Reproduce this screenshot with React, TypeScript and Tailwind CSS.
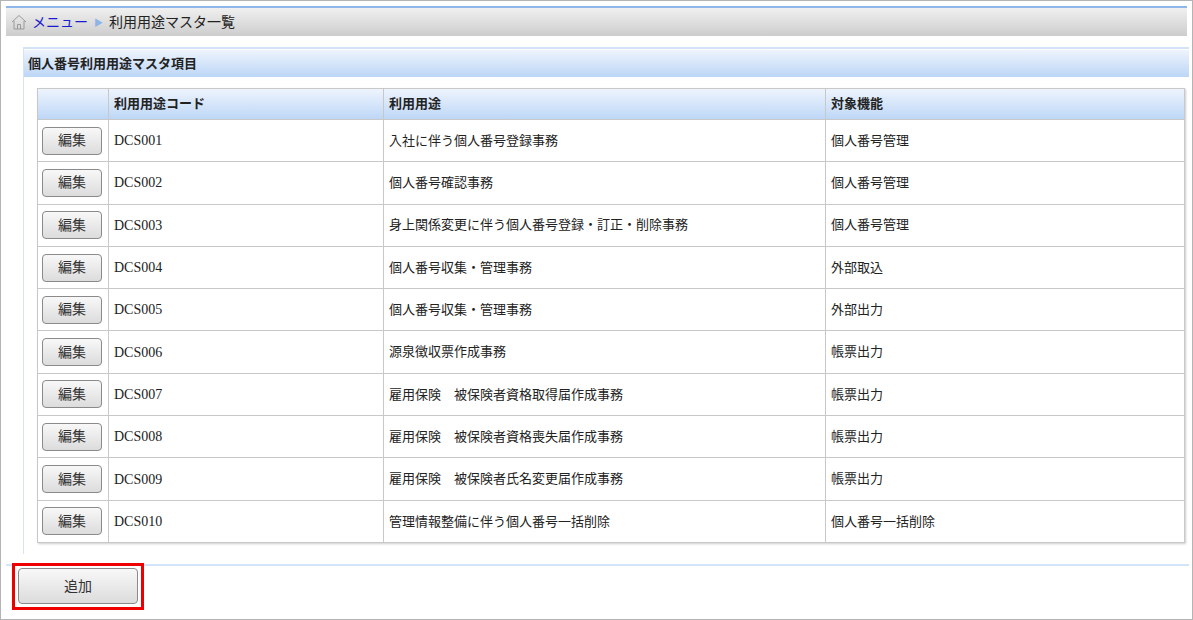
const rows = [
  ["DCS001", "入社に伴う個人番号登録事務", "個人番号管理"],
  ["DCS002", "個人番号確認事務", "個人番号管理"],
  ["DCS003", "身上関係変更に伴う個人番号登録・訂正・削除事務", "個人番号管理"],
  ["DCS004", "個人番号収集・管理事務", "外部取込"],
  ["DCS005", "個人番号収集・管理事務", "外部出力"],
  ["DCS006", "源泉徴収票作成事務", "帳票出力"],
  ["DCS007", "雇用保険　被保険者資格取得届作成事務", "帳票出力"],
  ["DCS008", "雇用保険　被保険者資格喪失届作成事務", "帳票出力"],
  ["DCS009", "雇用保険　被保険者氏名変更届作成事務", "帳票出力"],
  ["DCS010", "管理情報整備に伴う個人番号一括削除", "個人番号一括削除"],
];

export default function App() {
  const font = { fontFamily: '"Liberation Sans", "Noto Sans CJK JP", sans-serif' };
  return (
    <div className="w-[1193px] h-[620px] border border-[#b4b4b4] bg-white text-[13px] text-[#222] overflow-hidden" style={font}>
      <div className="mx-[5px] mt-[5px] h-[30px] border-t-2 border-[#8fb6e8] bg-gradient-to-b from-[#f0f0f0] to-[#cdcdcd] flex items-center pl-[4px] gap-[4px]">
        <svg width="18" height="18" viewBox="0 0 18 18" fill="none" stroke="#9a9a9a" strokeWidth="1">
          <path d="M2 9 L9 2.5 L16 9" />
          <path d="M4 8 V16 H14 V8" />
          <path d="M7.5 16 V11.5 H10.5 V16" />
        </svg>
        <span className="text-[#1a1ad0] text-[14px]">メニュー</span>
        <span className="text-[#8db4e6] text-[9px] mx-[2px] mt-[4px]">▶</span>
        <span className="text-[14px]">利用用途マスタ一覧</span>
      </div>
      <div className="ml-[22px] mr-[3px] mt-[11px] border-l border-t-2 border-[#d3e3f8] pb-[11px] pt-[1px]">
        <div className="h-[27px] bg-gradient-to-b from-[#eef4fd] to-[#bcd6f6] flex items-center pl-[4px] font-bold text-[13px]">
          個人番号利用用途マスタ項目
        </div>
        <table className="ml-[13px] mt-[11px] w-[1148px] border-collapse border border-[#c8c8c8] shadow-[1px_1px_2px_rgba(0,0,0,0.2)]">
          <thead>
            <tr className="h-[31px] bg-gradient-to-b from-[#eef4fd] to-[#bcd6f6] font-bold text-left">
              <th className="w-[71px] border border-[#c8c8c8]"></th>
              <th className="w-[275px] border border-[#c8c8c8] pl-[5px]">利用用途コード</th>
              <th className="w-[442px] border border-[#c8c8c8] pl-[5px]">利用用途</th>
              <th className="border border-[#c8c8c8] pl-[5px]">対象機能</th>
            </tr>
          </thead>
          <tbody>
            {rows.map((r) => (
              <tr key={r[0]} className="h-[42.3px]">
                <td className="border border-[#c8c8c8] pl-[4px]">
                  <button className="w-[60px] h-[28px] rounded-[4px] border border-[#8a8a8a] bg-gradient-to-b from-[#f8f8f8] to-[#dcdcdc] text-[14px] text-[#333]">編集</button>
                </td>
                <td className="border border-[#c8c8c8] pl-[5px]" style={{ fontFamily: '"Liberation Serif", serif', fontSize: 14 }}>{r[0]}</td>
                <td className="border border-[#c8c8c8] pl-[5px]">{r[1]}</td>
                <td className="border border-[#c8c8c8] pl-[5px]">{r[2]}</td>
              </tr>
            ))}
          </tbody>
        </table>
      </div>
      <div className="ml-[5px] mr-[3px] mt-[10px] border-t-2 border-[#d3e3f8]"></div>
      <div className="ml-[11px] mt-[-3px] w-[132px] h-[47px] border-[3px] border-[#ee0000] flex items-center justify-center">
        <button className="w-[120px] h-[36px] rounded-[4px] border border-[#8a8a8a] bg-gradient-to-b from-[#f8f8f8] to-[#dcdcdc] text-[14px] text-[#333]">追加</button>
      </div>
    </div>
  );
}
